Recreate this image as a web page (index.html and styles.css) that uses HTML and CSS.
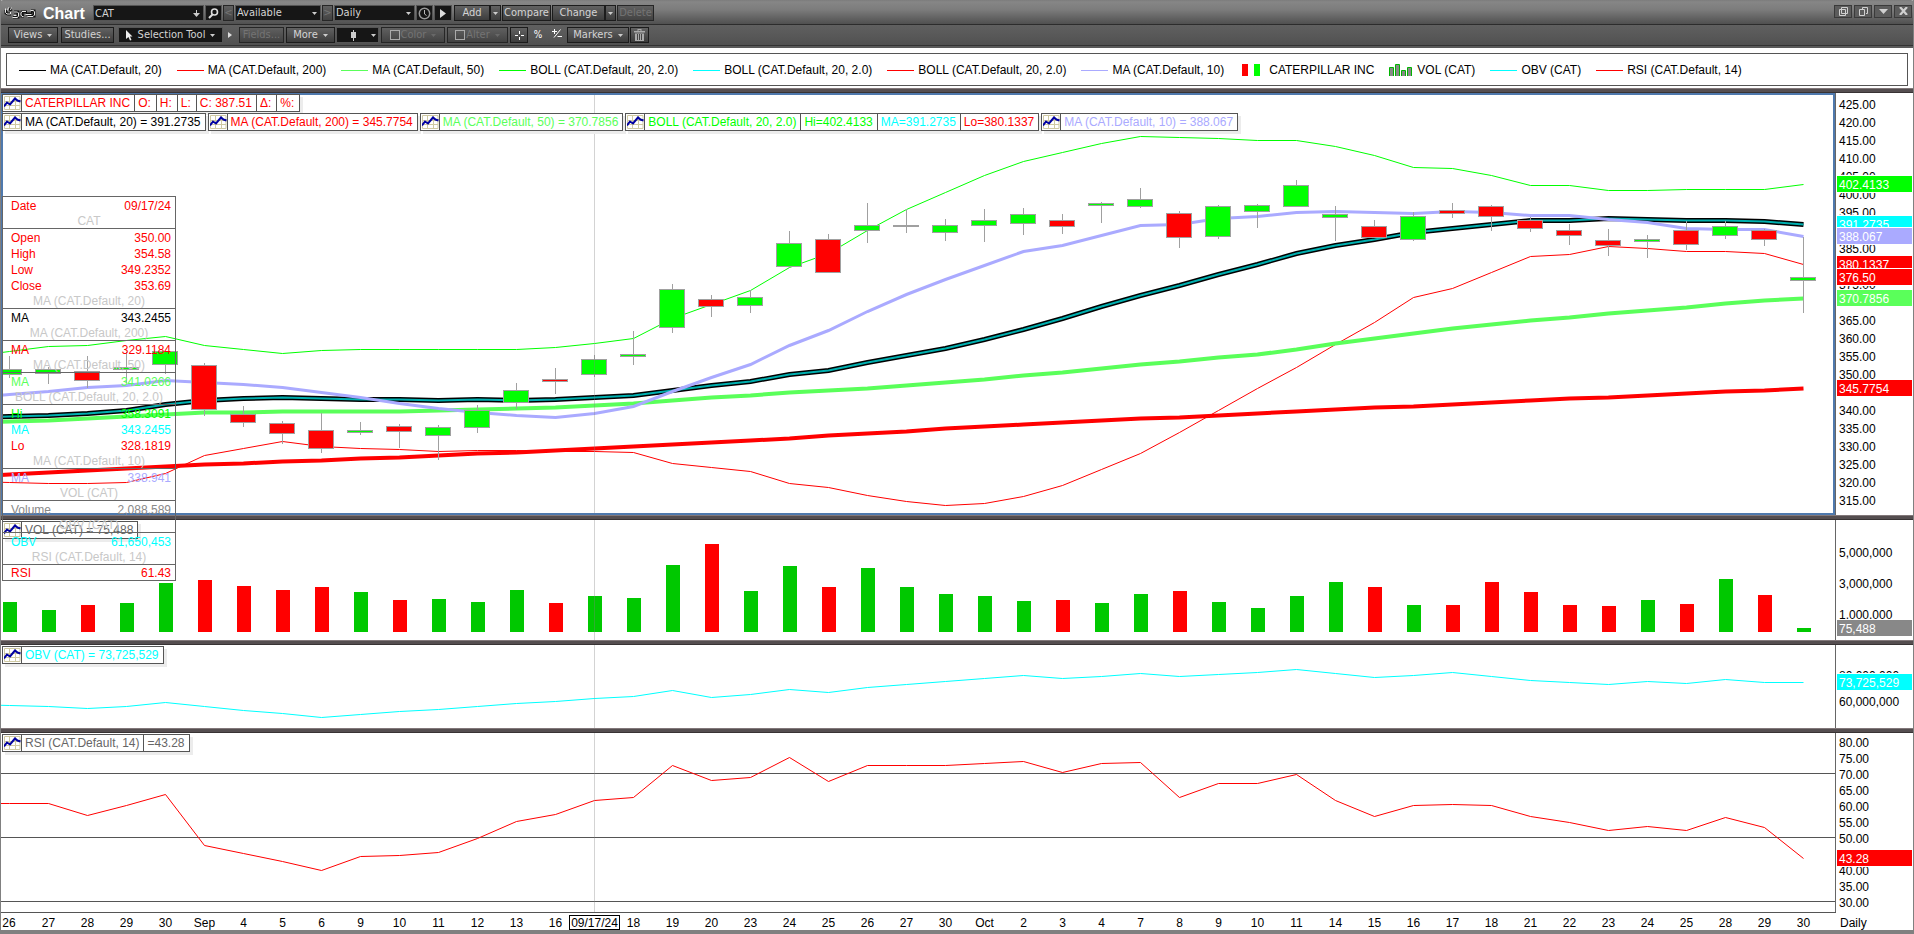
FILE: index.html
```html
<!DOCTYPE html>
<html lang="en">
<head>
<meta charset="utf-8">
<title>Chart - CAT</title>
<link rel="stylesheet" href="styles.css">
</head>
<body>
<svg class="defs" width="0" height="0" aria-hidden="true">
  <symbol id="down" viewBox="0 0 5 3"><path d="M0 0h5L2.500 3z" fill="currentColor"/></symbol>
  <symbol id="study" viewBox="0 0 17 14">
    <path d="M.5 .5h15.500v13H.5zM5.500 .5v13M11.500 .5v13M.5 5.500h15.500M.5 9.500h15.500" fill="none" stroke="#cfc9a2"/>
    <path d="M0 10.500L3 6.500L6 8.500L11 2.500L13.500 4.500L16.500 5.500" fill="none" stroke="#0000a0" stroke-width="2"/>
  </symbol>
</svg>

<header class="titlebar">
  <svg class="links" viewBox="0 0 34 12" width="34" height="12" aria-hidden="true">
    <g fill="none" stroke="#111" stroke-width="3"><path d="M2 3v3l2 1h3M6 1l1 3M9 10h5V5h-4M20 9h-2V5h5M24 9h6V4h-3M22 7h6"/></g>
    <g fill="none" stroke="#e8e8e8" stroke-width="1"><path d="M1.500 1.500v4l1.500 1.500h3.500v-2M4.500 .5l-1 3M7.500 .5l-1 2.500M8.500 10.500h5l1-1.500v-3l-1-1h-3.500M9.500 8.500h3M19.500 9.500h-1.500l-1-1.500v-2l1-1.500h4M23.500 9.500h5.500l1.500-1.500v-3l-1-1.500h-3M21.500 7.500h6"/></g>
  </svg>
  <h1 class="title">Chart</h1>
  <label class="field w-symbol"><input class="dark" type="text" value="CAT" aria-label="Symbol">
    <svg class="pick" width="7" height="7" viewBox="0 0 7 7"><path d="M3 0h1v3h3L3.500 7L0 3h3z" fill="#ccc"/></svg></label>
  <button class="btn dark w-17" aria-label="Search"><svg width="11" height="11" viewBox="0 0 11 11"><circle cx="6.500" cy="4" r="3" fill="none" stroke="#ddd" stroke-width="1.600"/><path d="M4.500 6.500L1 10" stroke="#ddd" stroke-width="2"/></svg></button>
  <button class="btn step" disabled>&lt;</button>
  <label class="field w-list"><select class="dark" aria-label="List"><option>Available</option></select><svg class="arrow"><use href="#down"/></svg></label>
  <button class="btn step" disabled>&gt;</button>
  <label class="field w-period"><select class="dark" aria-label="Period"><option>Daily</option></select><svg class="arrow"><use href="#down"/></svg></label>
  <button class="btn dark w-17" aria-label="Time"><svg width="13" height="13" viewBox="0 0 13 13"><circle cx="6.500" cy="6.500" r="5.200" fill="none" stroke="#999" stroke-width="1.500"/><path d="M6.500 3v4l2 1.500" fill="none" stroke="#bbb"/></svg></button>
  <button class="btn dark w-play" aria-label="Play"><svg width="6" height="9" viewBox="0 0 6 9"><path d="M0 0l6 4.500L0 9z" fill="#ddd"/></svg></button>
  <button class="btn w-add">Add</button><button class="btn w-drop" aria-label="Add menu"><svg class="tri"><use href="#down"/></svg></button>
  <button class="btn w-compare">Compare</button>
  <button class="btn w-change">Change</button><button class="btn w-drop" aria-label="Change menu"><svg class="tri"><use href="#down"/></svg></button>
  <button class="btn w-delete" disabled>Delete</button>
  <div class="window-buttons">
    <button aria-label="Detach"><svg width="9" height="9" viewBox="0 0 9 9"><path d="M2.500 .5h6v6h-6zM.5 2.500h6v6h-6z" fill="none" stroke="#d0d0d0"/></svg></button>
    <button aria-label="Restore"><svg width="9" height="9" viewBox="0 0 9 9"><path d="M3.500 2V.5h5v6H7M.5 2.500h5v6h-5z" fill="none" stroke="#d0d0d0"/></svg></button>
    <button aria-label="Minimize"><svg width="9" height="5" viewBox="0 0 9 5"><path d="M0 0h9L4.500 5z" fill="#d0d0d0"/></svg></button>
    <button aria-label="Close"><svg width="9" height="8" viewBox="0 0 9 8"><path d="M1 0l7 8M8 0L1 8" stroke="#d0d0d0" stroke-width="2.200"/></svg></button>
  </div>
</header>

<nav class="toolbar">
  <button class="btn w-views">Views <svg class="tri"><use href="#down"/></svg></button>
  <button class="btn w-studies">Studies...</button>
  <button class="btn dark w-tool"><svg width="7" height="11" viewBox="0 0 7 11"><path d="M0 0l6.500 6.500H4L5.500 10 4 10.500 2.500 7 0 9z" fill="#eee"/></svg>Selection Tool <svg class="tri"><use href="#down"/></svg></button>
  <svg class="more-arrow" width="4" height="6" viewBox="0 0 4 6"><path d="M0 0l4 3L0 6z" fill="#ddd"/></svg>
  <button class="btn w-fields" disabled>Fields...</button>
  <button class="btn w-more">More <svg class="tri"><use href="#down"/></svg></button>
  <button class="btn dark w-candle" aria-label="Chart style"><svg width="7" height="11" viewBox="0 0 7 11"><path d="M3 0h1v11H3zM1 2h5v6H1z" fill="#ccc"/></svg><svg class="tri"><use href="#down"/></svg></button>
  <button class="btn w-color" disabled><i class="swatch"></i>Color <svg class="tri"><use href="#down"/></svg></button>
  <button class="btn w-alter" disabled><i class="swatch"></i>Alter <svg class="tri"><use href="#down"/></svg></button>
  <button class="btn w-cross" aria-label="Crosshair"><svg width="9" height="9" viewBox="0 0 9 9"><path d="M4 0h1v3H4zM4 6h1v3H4zM0 4h3v1H0zM6 4h3v1H6z" fill="#fff"/></svg></button>
  <button class="plain w-pct">%</button>
  <button class="plain w-pm" aria-label="Plus minus"><svg width="10" height="9" viewBox="0 0 10 9"><path d="M2.500 0v5M0 2.500h5M8.500 .5L2 8.500M5.500 7.500h4.500" stroke="#fff" fill="none"/></svg></button>
  <button class="btn w-markers">Markers <svg class="tri"><use href="#down"/></svg></button>
  <button class="btn w-trash" aria-label="Remove"><svg width="11" height="12" viewBox="0 0 11 12"><path d="M0 2h11v1.500H0zM3.500 0h4v2h-1V1h-2v1h-1zM1 4.500h9v7.500H1z" fill="#aaa"/><path d="M3.500 5v6M5.500 5v6M7.500 5v6" stroke="#444"/></svg></button>
</nav>

<section class="legend-wrap">
  <ul class="legend">
    <li><i class="line black"></i>MA (CAT.Default, 20)</li>
    <li><i class="line red"></i>MA (CAT.Default, 200)</li>
    <li><i class="line soft"></i>MA (CAT.Default, 50)</li>
    <li><i class="line green"></i>BOLL (CAT.Default, 20, 2.0)</li>
    <li><i class="line cyan"></i>BOLL (CAT.Default, 20, 2.0)</li>
    <li><i class="line red"></i>BOLL (CAT.Default, 20, 2.0)</li>
    <li><i class="line violet"></i>MA (CAT.Default, 10)</li>
    <li class="pair"><svg width="19" height="12" viewBox="0 0 19 12"><path d="M0 0h6v12H0z" fill="#f00"/><path d="M12 0h6v12h-6z" fill="#0f0"/></svg>CATERPILLAR INC</li>
    <li><svg width="24" height="12" viewBox="0 0 24 12"><g fill="#888" stroke="#00b400"><path d="M.5 12V3.500h4V12M6.500 12V.5h4V12M12.500 12V6.500h4V12M18.500 12V3.500h4V12"/></g></svg>VOL (CAT)</li>
    <li><i class="line cyan"></i>OBV (CAT)</li>
    <li><i class="line red"></i>RSI (CAT.Default, 14)</li>
  </ul>
</section>

<main class="workspace">
  <div class="splitter"></div>
  <section class="pane price">
    <div class="plot active">
      <svg class="chart" id="price" viewBox="1 93 1834 422" preserveAspectRatio="none"></svg>
      <div class="readouts">
        <div class="row"><div class="box t-red"><span class="ico"><svg><use href="#study"/></svg></span><span>CATERPILLAR INC</span><span class="wide">O:</span><span class="wide">H:</span><span class="wide">L:</span><span>C: 387.51</span><span class="wide">Δ:</span><span class="wide">%:</span></div></div>
        <div class="row">
          <div class="box"><span class="ico"><svg><use href="#study"/></svg></span><span>MA (CAT.Default, 20) = 391.2735</span></div>
          <div class="box t-red"><span class="ico"><svg><use href="#study"/></svg></span><span>MA (CAT.Default, 200) = 345.7754</span></div>
          <div class="box t-soft"><span class="ico"><svg><use href="#study"/></svg></span><span>MA (CAT.Default, 50) = 370.7856</span></div>
          <div class="box t-green"><span class="ico"><svg><use href="#study"/></svg></span><span>BOLL (CAT.Default, 20, 2.0)</span><span>Hi=402.4133</span><span class="t-cyan">MA=391.2735</span><span class="t-red">Lo=380.1337</span></div>
          <div class="box t-violet"><span class="ico"><svg><use href="#study"/></svg></span><span>MA (CAT.Default, 10) = 388.067</span></div>
        </div>
      </div>
    </div>
    <div class="axis">
      <span>425.00</span><span>420.00</span><span>415.00</span><span>410.00</span><span>405.00</span><span>400.00</span><span>395.00</span><span></span><span>385.00</span><span></span><span>375.00</span><span></span><span>365.00</span><span>360.00</span><span>355.00</span><span>350.00</span><span></span><span>340.00</span><span>335.00</span><span>330.00</span><span>325.00</span><span>320.00</span><span>315.00</span>
      <b class="tag green" style="top:19.67%">402.4133</b>
      <b class="tag cyan" style="top:29.15%">391.2735</b>
      <b class="tag violet" style="top:31.99%">388.067</b>
      <b class="tag red" style="top:38.63%">380.1337</b>
      <b class="tag red" style="top:41.71%">376.50</b>
      <b class="tag soft" style="top:46.68%">370.7856</b>
      <b class="tag red" style="top:68.01%">345.7754</b>
    </div>
  </section>
  <div class="splitter"></div>
  <section class="pane volume">
    <div class="plot">
      <svg class="chart" id="volume" viewBox="1 520 1834 120" preserveAspectRatio="none"></svg>
      <div class="readouts"><div class="row"><div class="box t-gray"><span class="ico"><svg><use href="#study"/></svg></span><span>VOL (CAT) = 75,488</span></div></div></div>
    </div>
    <div class="axis"><span>5,000,000</span><span>3,000,000</span><span>1,000,000</span><b class="tag gray" style="top:83.33%">75,488</b></div>
  </section>
  <div class="splitter"></div>
  <section class="pane obv">
    <div class="plot">
      <svg class="chart" id="obv" viewBox="1 645 1834 83" preserveAspectRatio="none"></svg>
      <div class="readouts"><div class="row"><div class="box t-cyan"><span class="ico"><svg><use href="#study"/></svg></span><span>OBV (CAT) = 73,725,529</span></div></div></div>
    </div>
    <div class="axis"><span>80,000,000</span><span>60,000,000</span><b class="tag cyan" style="top:34.94%">73,725,529</b></div>
  </section>
  <div class="splitter"></div>
  <section class="pane rsi">
    <div class="plot">
      <svg class="chart" id="rsi" viewBox="1 733 1834 179" preserveAspectRatio="none"></svg>
      <div class="readouts"><div class="row"><div class="box t-gray"><span class="ico"><svg><use href="#study"/></svg></span><span>RSI (CAT.Default, 14)</span><span>=43.28</span></div></div></div>
    </div>
    <div class="axis"><span>80.00</span><span>75.00</span><span>70.00</span><span>65.00</span><span>60.00</span><span>55.00</span><span>50.00</span><span></span><span>40.00</span><span>35.00</span><span>30.00</span><b class="tag red" style="top:65.36%">43.28</b></div>
  </section>
  <footer class="timeline">
    <ol class="dates" id="dates"></ol>
    <div class="period">Daily</div>
  </footer>

  <table class="inspector">
    <tbody>
      <tr class="t-red"><th>Date</th><td>09/17/24</td></tr>
      <tr class="head"><th colspan="2">CAT</th></tr>
      <tr class="t-red"><th>Open</th><td>350.00</td></tr>
      <tr class="t-red"><th>High</th><td>354.58</td></tr>
      <tr class="t-red"><th>Low</th><td>349.2352</td></tr>
      <tr class="t-red"><th>Close</th><td>353.69</td></tr>
      <tr class="head"><th colspan="2">MA (CAT.Default, 20)</th></tr>
      <tr><th>MA</th><td>343.2455</td></tr>
      <tr class="head"><th colspan="2">MA (CAT.Default, 200)</th></tr>
      <tr class="t-red"><th>MA</th><td>329.1184</td></tr>
      <tr class="head"><th colspan="2">MA (CAT.Default, 50)</th></tr>
      <tr class="t-soft"><th>MA</th><td>341.0266</td></tr>
      <tr class="head"><th colspan="2">BOLL (CAT.Default, 20, 2.0)</th></tr>
      <tr class="t-green"><th>Hi</th><td>358.3091</td></tr>
      <tr class="t-cyan"><th>MA</th><td>343.2455</td></tr>
      <tr class="t-red"><th>Lo</th><td>328.1819</td></tr>
      <tr class="head"><th colspan="2">MA (CAT.Default, 10)</th></tr>
      <tr class="t-violet"><th>MA</th><td>338.941</td></tr>
      <tr class="head"><th colspan="2">VOL (CAT)</th></tr>
      <tr class="t-mid"><th>Volume</th><td>2,088,589</td></tr>
      <tr class="head"><th colspan="2">OBV (CAT)</th></tr>
      <tr class="t-cyan"><th>OBV</th><td>61,650,453</td></tr>
      <tr class="head"><th colspan="2">RSI (CAT.Default, 14)</th></tr>
      <tr class="t-red"><th>RSI</th><td>61.43</td></tr>
    </tbody>
  </table>
</main>
<script src="chart.js"></script>
</body>
</html>
```

FILE: styles.css
```css
* { box-sizing: border-box; }
html, body { margin: 0; }
body {
  display: flex;
  flex-direction: column;
  min-height: 100vh;
  background: #fff;
  color: #000;
  font: 12px/16px "Liberation Sans", Arial, sans-serif;
  border: solid #808080;
  border-width: 0 1px 4px;
}
.defs { position: absolute; }
ul, ol { margin: 0; padding: 0; list-style: none; }

/* title bar and toolbar */
.titlebar, .toolbar {
  display: flex;
  align-items: center;
  gap: 1px;
  flex: none;
  margin: 0 -1px;
  font: 11px/14px "DejaVu Sans Condensed", Tahoma, sans-serif;
  white-space: nowrap;
}
.titlebar {
  height: 25px;
  padding: 2px 2px 0 4px;
  background: linear-gradient(#7c7c7c, #868686 8%, #7c7c7c 40%, #505050);
  border-bottom: 1px solid #2c2c2c;
  border-radius: 3px 3px 0 0;
}
.toolbar {
  height: 23px;
  padding: 0 0 1px 8px;
  background: linear-gradient(#606060, #505050);
  border-bottom: 2px solid #5a5a5a;
  box-shadow: inset 0 -1px #333;
}
.links { margin-right: 4px; }
.title { margin: 0; padding-top: 2px; width: 49px; color: #fff; font: bold 16px/18px "Liberation Sans", Arial, sans-serif; }
.field { position: relative; height: 16px; }
.dark, .btn.dark { background: #161616; border: 1px solid #555; color: #d4d4d4; }
input.dark, select.dark {
  appearance: none;
  width: 100%;
  height: 16px;
  padding: 0 1px;
  border-radius: 0;
  font: inherit;
  outline: 0;
}
.arrow, .tri { width: 5px; height: 3px; color: #ccc; flex: none; }
.arrow { position: absolute; right: 4px; top: 7px; }
.pick { position: absolute; right: 4px; top: 5px; }
.btn {
  display: inline-flex;
  align-items: center;
  justify-content: center;
  gap: 5px;
  flex: none;
  height: 16px;
  padding: 0;
  color: #d4d4d4;
  font: inherit;
  background: linear-gradient(#626262, #3c3c3c);
  border: 1px solid #1c1c1c;
}
.btn:disabled { color: #747474; background: linear-gradient(#606060, #424242); border-color: #262626; }
.btn:disabled .tri { color: #686868; }
.w-symbol { width: 111px; }
.w-17 { width: 17px; }
.btn.step { width: 11px; }
.w-list { width: 86px; }
.w-period { width: 81px; }
.w-play { width: 18px; margin-right: 1px; }
.w-add { width: 36px; margin-right: -1px; }
.w-drop { width: 11px; }
.w-compare { width: 49px; }
.w-change { width: 53px; margin-right: -1px; }
.w-delete { width: 37px; }
.w-views { width: 50px; margin-right: 2px; }
.w-studies { width: 53px; margin-right: 3px; }
.w-tool { width: 105px; }
.more-arrow { margin: 0 6px 0 4px; }
.w-fields { width: 45px; margin-right: 1px; }
.w-more { width: 49px; }
.btn.w-candle { width: 43px; gap: 14px; padding-left: 10px; margin-right: 1px; }
.w-color { width: 64px; margin-right: 1px; }
.w-alter { width: 61px; margin-right: 1px; }
.w-cross { width: 18px; }
.plain { width: 18px; padding: 0; color: #fff; font: inherit; font-size: 10px; background: none; border: 0; }
.w-markers { width: 62px; }
.w-trash { width: 19px; }
.swatch { width: 10px; height: 10px; border: 1px solid #aaa; margin-right: -4px; }
.window-buttons { display: flex; gap: 2px; margin: 0 0 4px auto; }
.window-buttons button {
  display: flex;
  align-items: center;
  justify-content: center;
  width: 18px;
  height: 13px;
  padding: 0;
  background: #5c5c5c;
  border: 1px solid #3a3a3a;
}

/* series legend */
.legend-wrap { flex: none; padding: 5px 5px 3px; background: #fff; }
.legend {
  display: flex;
  align-items: center;
  gap: 15px;
  height: 33px;
  padding: 1px 0 0 12px;
  border: 1px solid #555;
  white-space: nowrap;
  overflow: hidden;
}
.legend li { display: flex; align-items: center; gap: 4px; }
.legend .pair { gap: 8px; padding-left: 3px; }
.line { width: 27px; height: 1px; }
.black { background: #000; }
.red { background: #f00; }
.green { background: #0f0; }
.soft { background: #5aff5a; }
.cyan { background: #0ff; }
.violet { background: #aaaaff; }
.gray { background: #888; }

/* panes */
.workspace { position: relative; display: flex; flex: 1; flex-direction: column; margin-top: -1px; }
.splitter { flex: none; height: 5px; background: #554e50; border-top: 1px solid #82787a; border-bottom: 1px solid #383334; }
.pane { display: flex; min-height: 0; }
.price { flex: 422 1 0; }
.volume { flex: 120 1 0; }
.obv { flex: 83 1 0; }
.rsi { flex: 179 1 0; }
.plot { position: relative; flex: 1; min-width: 0; border-right: 1px solid #666; }
.chart { position: absolute; width: 100%; height: 100%; }
.active::after { content: ""; position: absolute; inset: 0; border: 2px solid #4f79ad; pointer-events: none; }
.readouts { position: absolute; z-index: 1; top: 1px; left: 1px; display: grid; gap: 1px; white-space: nowrap; }
.row { display: flex; gap: 2px; }
.box { display: flex; height: 18px; line-height: 17px; background: #fff; border: 1px solid #555; box-shadow: 3px 3px #ececec; }
.box span { padding: 0 4px 0 3px; }
.box span + span { border-left: 1px solid #555; }
.box .ico { display: flex; align-items: center; width: 18px; padding: 0 0 0 1px; }
.box .wide { padding-right: 5px; }
.ico svg { width: 17px; height: 14px; }
.t-red { color: #f00; }
.t-green { color: #0f0; }
.t-soft { color: #5aff5a; }
.t-cyan { color: #0ff; }
.t-violet { color: #aaaaff; }
.t-gray { color: #666; }
.t-mid { color: #888; }

/* value axes */
.axis { position: relative; display: flex; flex-direction: column; flex: none; width: 77px; overflow: hidden; }
.axis span { display: flex; align-items: center; flex: 1; padding-left: 3px; }
.price .axis { padding: 3px 0 5px; }
.volume .axis { padding: 17px 0 10px; }
.obv .axis { padding: 18px 0 13px; }
.rsi .axis { padding: 2px 0 1px; }
.tag {
  position: absolute;
  left: 1px;
  right: 1px;
  height: 16px;
  padding-left: 2px;
  color: #fff;
  font-weight: normal;
  line-height: 18px;
  overflow: hidden;
  box-shadow: 0 0 0 1px #fff;
}

/* time axis */
.timeline { display: flex; flex: none; height: 18px; overflow: hidden; }
.dates { display: flex; flex: 1; min-width: 0; padding-right: 13px; border-top: 1px solid #555; }
.dates li { display: flex; justify-content: center; flex: 1 1 0; width: 0; padding-top: 2px; line-height: 17px; white-space: nowrap; }
.dates li:first-child { flex: 0 0 28px; padding-right: 12px; }
.dates .cursor { flex: none; height: 15px; line-height: 15px; padding: 0 1px; border: 1px solid #000; background: #fff; }
.period { flex: none; width: 77px; padding: 3px 0 0 4px; line-height: 17px; }

/* data inspector */
.inspector {
  position: absolute;
  z-index: 2;
  top: 108px;
  left: 1px;
  width: 174px;
  border-collapse: collapse;
  border: 1px solid #666;
  white-space: nowrap;
}
.inspector th, .inspector td { height: 16px; padding: 2px 0 0; line-height: 13px; font-weight: normal; vertical-align: bottom; }
.inspector th { padding-left: 8px; text-align: left; }
.inspector td { padding-right: 4px; text-align: right; }
.inspector .head th { padding-left: 0; color: #c8c8c8; text-align: center; border-bottom: 1px solid #666; }
```

FILE: chart.js
```javascript
const STEP = 39;
const FIRST = 9;
const CURSOR = 15;
const xAt = i => FIRST + STEP * i;

const dates = ("26,27,28,29,30,Sep,4,5,6,9,10,11,12,13,16,09/17/24,18,19,20,23,24,25,26,27,30,Oct," +
  "2,3,4,7,8,9,10,11,14,15,16,17,18,21,22,23,24,25,28,29,30").split(",");

const bollHi = [351,346,345,340,336,345,349,353,350,349,349,349,349,349,347,343,338,318,304,290,267,253,230,209,192,175,161,152,143,136,137,138,140,140,146,155,167,168,175,185,185,190,190,189,189,189,184];
const bollLo = [482,483,483,482,473,455,448,441,446,448,449,451,450,450,451,451,452,463,467,471,483,487,495,501,505,503,496,485,469,453,432,410,388,367,344,322,297,288,272,256,254,246,248,251,251,253,264];
const ma10 = [394,391,387,385,380,382,384,387,392,397,403,408,412,415,417,413,406,391,377,364,345,330,311,294,279,265,251,245,235,225,224,218,216,212,211,212,213,211,212,215,215,219,222,228,229,229,236];
const ma20 = [416,415,413,410,404,400,398,397,398,399,399,400,399,400,399,397,395,390,385,381,374,370,362,355,348,339,329,318,306,295,285,274,264,253,245,239,232,228,224,220,220,218,219,220,220,221,224];
const ma50 = [421,420,418,416,414,412,412,411,411,411,411,410,409,408,407,405,403,400,397,395,392,390,388,385,382,379,375,372,368,364,361,357,354,349,343,338,333,328,324,320,317,313,310,307,303,300,298];
const ma200 = [474,472,470,468,466,464,463,461,460,458,457,455,453,452,450,448,446,444,442,440,438,435,433,431,428,426,424,422,420,418,417,415,413,411,409,407,406,404,402,400,398,397,395,393,391,390,388];
const obv = [705,706,708,706,702,706,710,713,717,714,711,709,706,703,701,698,696,690,697,694,689,692,687,684,681,678,675,678,676,673,676,674,672,669,673,677,675,672,676,680,682,684,681,683,679,682,682];
const rsi = [803,803,815,805,794,845,853,861,870,856,855,852,838,821,814,800,797,765,780,777,757,781,765,765,765,763,761,772,763,762,797,783,783,774,800,816,805,804,805,816,822,830,826,830,817,827,858];

// high, body top, body bottom, low, colour
const candles = [
  [356,369,374,378,"g"],[367,369,373,384,"g"],[356,371,380,388,"r"],[352,367,369,383,"g"],[351,351,364,374,"g"],
  [363,365,409,416,"r"],[406,414,422,427,"r"],[421,423,433,444,"r"],[413,430,448,453,"r"],[422,430,432,435,"g"],
  [424,426,431,448,"r"],[425,427,435,460,"g"],[405,410,427,433,"g"],[383,390,402,409,"g"],[368,379,381,394,"r"],
  [355,359,374,377,"g"],[331,354,356,365,"g"],[284,289,327,333,"g"],[295,299,306,317,"r"],[290,297,305,313,"g"],
  [231,243,266,266,"g"],[234,239,272,272,"r"],[203,225,230,243,"g"],[209,225,226,233,"g"],[219,225,232,241,"g"],
  [209,220,225,242,"g"],[208,214,223,235,"g"],[214,220,226,234,"r"],[202,203,205,223,"g"],[188,199,206,208,"g"],
  [211,213,237,248,"r"],[205,206,236,239,"g"],[204,205,211,228,"g"],[180,185,206,206,"g"],[206,214,217,241,"g"],
  [220,226,237,238,"r"],[212,216,239,241,"g"],[203,210,213,218,"r"],[205,206,216,231,"r"],[217,220,228,232,"r"],
  [224,230,235,245,"r"],[229,240,245,256,"r"],[235,239,241,258,"g"],[221,230,244,250,"r"],[221,226,235,239,"g"],
  [229,230,239,246,"r"],[237,277,280,313,"g"]
];
const volTop = [602,610,605,603,583,580,586,590,587,592,600,599,602,590,603,596,598,565,544,591,566,587,568,587,594,596,601,600,603,594,591,602,608,596,582,587,605,605,582,592,605,606,600,604,579,595,628];
const volColour = "GGRGGRRRRGRGGGRGGGRGGRGGGGGRGGRGGGGRGRRRRRGRGRG";

function line(ys, colour, width) {
  const lead = `${xAt(-1)},${2 * ys[0] - ys[1] + 0.5}`;
  const pts = ys.map((y, i) => `${xAt(i) + 0.5},${y + 0.5}`).join(" ");
  return `<polyline points="${lead} ${pts}" fill="none" stroke="${colour}" stroke-width="${width}"/>`;
}
const rect = (x, y, w, h, fill) =>
  `<rect x="${x}" y="${y}" width="${w}" height="${h}" fill="${fill}" shape-rendering="crispEdges"/>`;
const cursor = () => rect(xAt(CURSOR), 90, 1, 830, "#808080").replace("/>", ' fill-opacity=".35"/>');

function candle([high, top, bottom, low, c], i) {
  const x = xAt(i);
  const fill = c === "g" ? "#0f0" : "#f00";
  return rect(x, high, 1, low - high, "#a0a0a0") +
    rect(x - 13, top, 26, bottom - top + 1, "#a0a0a0") +
    rect(x - 12, top + 1, 24, Math.max(bottom - top - 1, 0), fill);
}

document.getElementById("price").innerHTML =
  line(bollHi, "#0f0", 1) + line(bollLo, "#f00", 1) +
  line(ma20, "#000", 5) + line(ma20, "#00b0b0", 2) +
  line(ma200, "#f00", 4) + line(ma50, "#5aff5a", 4) + line(ma10, "#aaf", 3) +
  candles.map(candle).join("") + cursor();
document.getElementById("volume").innerHTML =
  volTop.map((y, i) => rect(xAt(i) - 6, y, 14, 632 - y, volColour[i] === "G" ? "#00c800" : "#f00")).join("") + cursor();
document.getElementById("obv").innerHTML = line(obv, "#0ff", 1) + cursor();
document.getElementById("rsi").innerHTML =
  [773, 837, 901].map(y => rect(1, y, 1834, 1, "#555")).join("") + line(rsi, "#f00", 1) + cursor();

document.getElementById("dates").innerHTML =
  dates.map((d, i) => `<li>${i === CURSOR ? `<span class="cursor">${d}</span>` : d}</li>`).join("");
```
